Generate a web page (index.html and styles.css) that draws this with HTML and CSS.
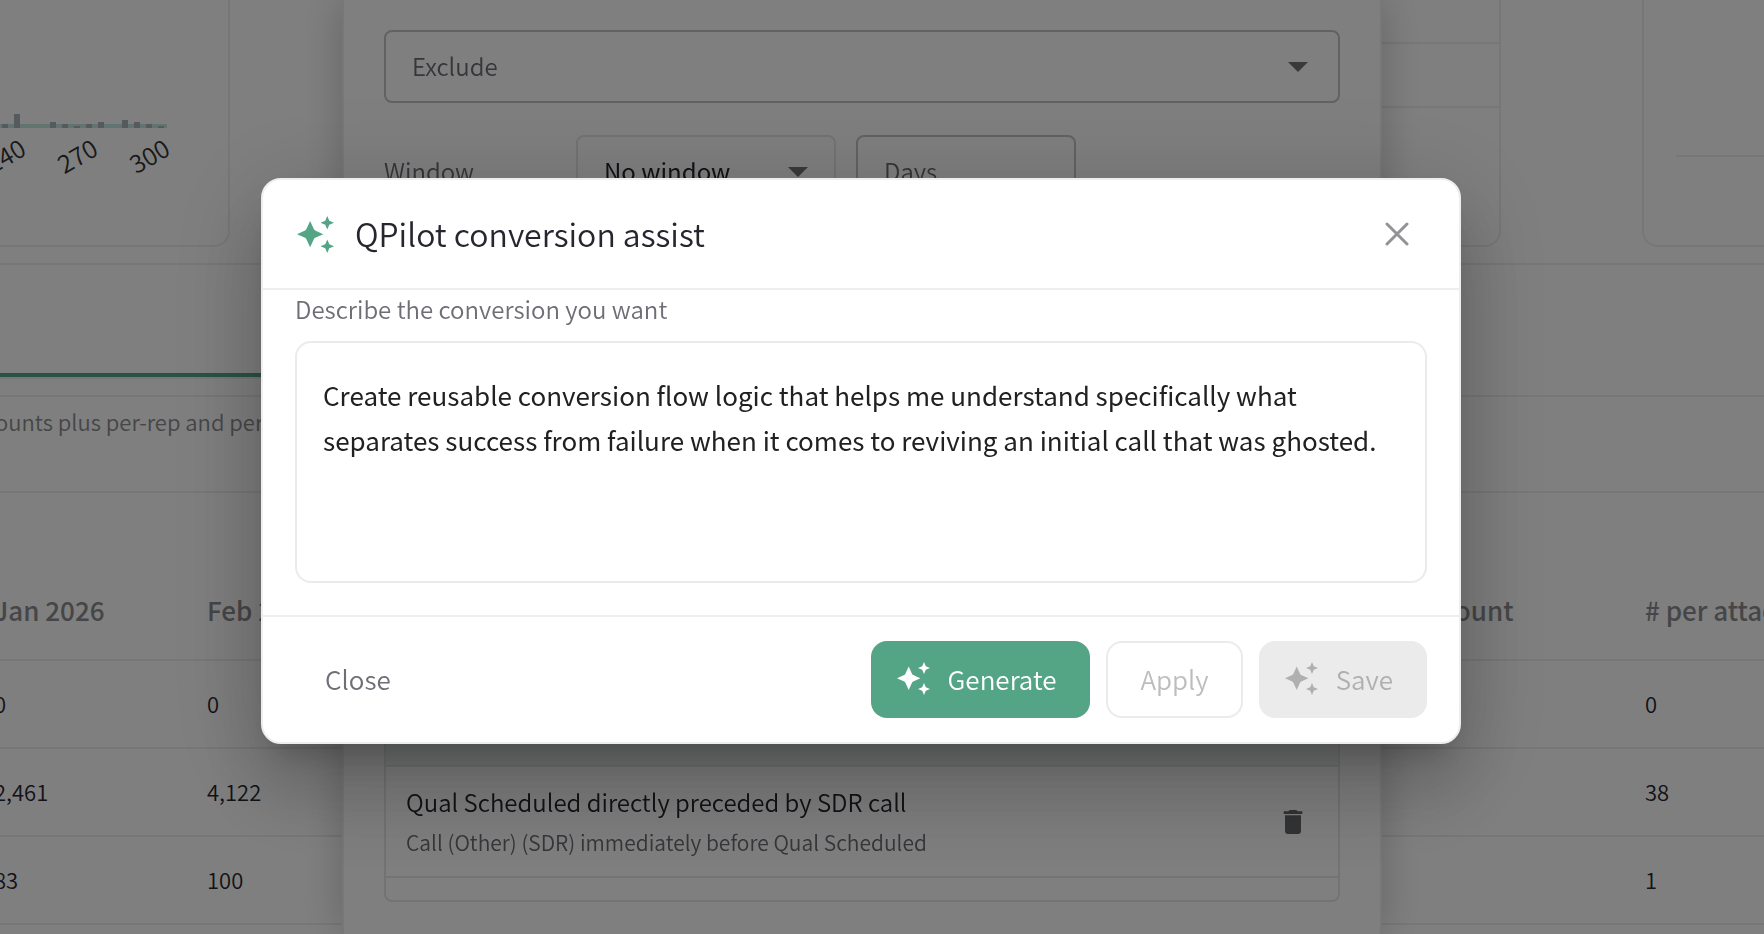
FILE: index.html
```html
<!DOCTYPE html>
<html lang="en">
<head>
<meta charset="utf-8">
<meta name="viewport" content="width=device-width, initial-scale=1">
<title>QPilot conversion assist</title>
<link rel="stylesheet" href="styles.css">
</head>
<body>
<svg class="sprite" aria-hidden="true">
  <symbol id="sparkle" viewBox="0 0 110 110">
    <path d="M39 15L50 39Q51 42 54 43L78 54L54 65Q51 66 50 69L39 93L28 69Q27 66 24 65L0 54L24 43Q27 42 28 39Z"/>
    <path d="M90 0L96 14L110 20L96 26L90 40L84 26L70 20L84 14Z"/>
    <path d="M90 70L96 84L110 90L96 96L90 110L84 96L70 90L84 84Z"/>
  </symbol>
</svg>

<main class="page">
  <section class="cards">
    <div class="card card-chart">
      <svg class="chart" viewBox="0 0 228 245" width="228" height="245" role="img" aria-label="Distribution">
        <rect class="chart-band" x="0" y="124" width="167" height="4"/>
        <g class="chart-bars">
          <rect x="2" y="124" width="6" height="4"/>
          <rect x="14" y="114" width="6" height="14"/>
          <rect x="50" y="122" width="6" height="6"/>
          <rect x="62" y="124" width="6" height="4"/>
          <rect x="74" y="126" width="6" height="2"/>
          <rect x="86" y="124" width="6" height="4"/>
          <rect x="98" y="122" width="6" height="6"/>
          <rect x="122" y="120" width="6" height="8"/>
          <rect x="134" y="122" width="6" height="6"/>
          <rect x="146" y="124" width="6" height="4"/>
          <rect x="158" y="126" width="6" height="2"/>
        </g>
        <g class="chart-labels">
          <text transform="translate(28 154) rotate(-30)">240</text>
          <text transform="translate(100 154) rotate(-30)">270</text>
          <text transform="translate(172 154) rotate(-30)">300</text>
        </g>
      </svg>
    </div>
    <div class="card card-list">
      <div class="list-line"></div>
      <div class="list-line"></div>
    </div>
    <div class="card card-last"><div class="axis-line"></div></div>
  </section>
  <div class="tabs"><div class="tab-active"></div></div>
  <p class="summary">ounts plus per-rep and per-account rates</p>
  <table class="data">
    <colgroup><col class="col-month"><col class="col-month"><col><col class="col-month"><col class="col-wide"></colgroup>
    <thead>
      <tr><th scope="col">Jan 2026</th><th scope="col">Feb 2026</th><td></td><th scope="col">Count</th><th scope="col"># per attached</th></tr>
    </thead>
    <tbody>
      <tr><td>0</td><td>0</td><td></td><td></td><td>0</td></tr>
      <tr><td>2,461</td><td>4,122</td><td></td><td></td><td>38</td></tr>
      <tr><td>83</td><td>100</td><td></td><td></td><td>1</td></tr>
      <tr><td></td><td></td><td></td><td></td><td></td></tr>
    </tbody>
  </table>
</main>

<div class="drawer-layer">
  <aside class="drawer">
    <div class="field">
      <select class="control muted strong-border" aria-label="Exclude"><option>Exclude</option></select>
      <svg class="caret" viewBox="0 0 20 10" aria-hidden="true"><path d="M0 0h20L10 10z"/></svg>
    </div>
    <div class="window-row">
      <label class="window-label" for="window">Window</label>
      <div class="field field-window">
        <select class="control" id="window"><option>No window</option></select>
        <svg class="caret" viewBox="0 0 20 10" aria-hidden="true"><path d="M0 0h20L10 10z"/></svg>
      </div>
      <input class="control days strong-border" type="text" placeholder="Days" aria-label="Days">
    </div>
    <div class="saved">
      <div class="saved-selected"></div>
      <div class="saved-row">
        <div class="saved-text">
          <div class="saved-title">Qual Scheduled directly preceded by SDR call</div>
          <div class="saved-sub">Call (Other) (SDR) immediately before Qual Scheduled</div>
        </div>
        <button class="icon-button" type="button" aria-label="Delete">
          <svg class="trash" viewBox="0 0 24 24"><path d="M6 19c0 1.100.9 2 2 2h8c1.100 0 2-.9 2-2V7H6v12zM19 4h-3.500l-1-1h-5l-1 1H5v2h14V4z"/></svg>
        </button>
      </div>
    </div>
  </aside>
</div>

<div class="overlay">
  <section class="dialog" role="dialog" aria-modal="true" aria-labelledby="dialog-title">
    <header class="dialog-header">
      <svg class="title-icon" aria-hidden="true"><use href="#sparkle"/></svg>
      <h1 class="dialog-title" id="dialog-title">QPilot conversion assist</h1>
      <button class="icon-button" type="button" aria-label="Close dialog">
        <svg class="cross" viewBox="0 0 24 24"><path d="M2 2L22 22M22 2L2 22"/></svg>
      </button>
    </header>
    <div class="dialog-body">
      <label class="prompt-label" for="prompt">Describe the conversion you want</label>
      <textarea class="prompt" id="prompt">Create reusable conversion flow logic that helps me understand specifically what separates success from failure when it comes to reviving an initial call that was ghosted.</textarea>
    </div>
    <footer class="dialog-footer">
      <button class="button button-text" type="button">Close</button>
      <button class="button button-primary" type="button"><svg class="button-icon" aria-hidden="true"><use href="#sparkle"/></svg>Generate</button>
      <button class="button button-outline" type="button" disabled>Apply</button>
      <button class="button button-disabled" type="button" disabled><svg class="button-icon" aria-hidden="true"><use href="#sparkle"/></svg>Save</button>
    </footer>
  </section>
</div>
</body>
</html>
```
FILE: styles.css
```css
:root {
  --line: #eeeeee;
  --green: #54a586;
  --ink: #26262f;
  --muted: #6e6e76;
}

* { box-sizing: border-box; }

body {
  margin: 0;
  height: 100vh;
  overflow: hidden;
  background: #fff;
  color: var(--ink);
  font-family: "Noto Sans CJK SC", "Noto Sans", sans-serif;
  font-size: 24px;
  font-weight: 350;
  line-height: 32px;
}

button, input, select, textarea {
  font: inherit;
  color: inherit;
}

.sprite { display: none; }

/* Report page */
.page {
  height: 100vh;
  overflow: hidden;
}

.cards {
  display: grid;
  grid-template-columns: 230px 1fr 122px;
  gap: 141px;
  height: 265px;
  padding-bottom: 18px;
  border-bottom: 2px solid var(--line);
}

.card {
  border: 2px solid var(--line);
  border-top: 0;
  border-radius: 0 0 16px 16px;
}

.card-chart {
  border-left: 0;
  border-bottom-left-radius: 0;
}

.card-last {
  border-right: 0;
  border-bottom-right-radius: 0;
  padding: 155px 0 0 32px;
}

.card-list { padding-top: 42px; }
.list-line { height: 64px; border-top: 2px solid var(--line); }
.axis-line { border-top: 2px solid var(--line); }

.chart { display: block; }
.chart-band { fill: #c2eae0; }
.chart-bars { fill: #acb4b8; }
.chart-labels { font-size: 25px; fill: #333; text-anchor: end; }

.tabs {
  height: 132px;
  padding-top: 108px;
  border-bottom: 2px solid var(--line);
}

.tab-active {
  width: 50%;
  height: 6px;
  border-top: 4px solid var(--green);
  border-bottom: 2px solid var(--line);
}

.summary {
  height: 96px;
  margin: 0;
  padding-top: 8px;
  border-bottom: 2px solid var(--line);
  color: #8c8c90;
  font-size: 22px;
  text-indent: -5px;
  white-space: nowrap;
}

.data {
  width: 100%;
  table-layout: fixed;
  border-collapse: collapse;
}

.col-month { width: 207px; }
.col-wide { width: 119px; }

.data th, .data td {
  height: 88px;
  padding: 0 0 2px;
  border-bottom: 2px solid var(--line);
  text-align: left;
  white-space: nowrap;
  font-size: 22px;
}

.data tr > :first-child { text-indent: -6px; }

.data th {
  height: 167px;
  padding-top: 101px;
  vertical-align: top;
  color: #8c8c90;
  font-size: 26px;
  font-weight: 500;
}

/* Conversion drawer */
.drawer-layer {
  position: fixed;
  inset: 0;
  display: flex;
  justify-content: center;
  padding-right: 40px;
}

.drawer {
  display: flex;
  flex-direction: column;
  width: 1040px;
  padding: 30px 40px 32px;
  border: solid var(--line);
  border-width: 0 2px;
  background: #fff;
  box-shadow: 0 0 40px rgba(0, 0, 0, .22);
}

.field {
  display: grid;
  align-items: center;
}

.field > * { grid-area: 1 / 1; }

.caret {
  width: 20px;
  height: 10px;
  margin-right: 32px;
  justify-self: end;
  fill: #757575;
  pointer-events: none;
}

.control {
  appearance: none;
  width: 100%;
  height: 73px;
  padding: 0 26px 2px;
  border: 2px solid #e6e6e6;
  border-radius: 8px;
  background: none;
}

.strong-border { border-color: #c4c4c4; }
.muted { color: var(--muted); }
.control::placeholder { color: var(--muted); opacity: 1; }

.window-row {
  display: flex;
  align-items: center;
  margin-top: 32px;
}

.window-label { width: 192px; padding-bottom: 2px; color: var(--muted); }
.field-window { width: 260px; margin-right: 20px; }
.field-window .control { font-weight: 400; }
.field-window .caret { margin-right: 28px; }
.days { width: 220px; }

.saved {
  margin-top: auto;
  padding-bottom: 22px;
  border: 2px solid #e6e6e6;
  border-radius: 8px;
}

.saved-selected {
  height: 120px;
  background: #eef5f2;
}

.saved-row {
  display: flex;
  align-items: center;
  justify-content: space-between;
  padding: 15px 29px 14px 20px;
  border: solid #e6e6e6;
  border-width: 2px 0;
}

.saved-title { line-height: 40px; }
.saved-sub { line-height: 40px; font-size: 21px; color: var(--muted); }

.icon-button {
  display: flex;
  padding: 0;
  border: 0;
  background: none;
}

.trash { width: 32px; height: 32px; fill: #66686c; }

/* Dialog */
.overlay {
  position: fixed;
  inset: 0;
  display: flex;
  align-items: center;
  justify-content: center;
  padding: 0 42px 12px 0;
  background: rgba(0, 0, 0, .5);
}

.dialog {
  width: 1200px;
  border: 2px solid var(--line);
  border-radius: 20px;
  background: #fff;
  box-shadow:
    0 22px 30px -14px rgba(0, 0, 0, .2),
    0 48px 76px 6px rgba(0, 0, 0, .14),
    0 18px 92px 16px rgba(0, 0, 0, .12);
}

.dialog-header {
  display: flex;
  align-items: center;
  height: 110px;
  padding: 0 50px 0 34px;
  border-bottom: 2px solid var(--line);
}

.title-icon { width: 37px; height: 37px; fill: var(--green); }

.dialog-title {
  flex: 1;
  margin: 0 0 0 21px;
  padding-bottom: 2px;
  font-size: 32px;
  font-weight: 350;
  line-height: 48px;
}

.cross {
  width: 24px;
  height: 24px;
  fill: none;
  stroke: #939396;
  stroke-width: 3;
  stroke-linecap: round;
}

.dialog-body {
  display: flex;
  flex-direction: column;
  gap: 16px;
  padding: 3px 32px 32px;
}

.prompt-label { color: var(--muted); }

.prompt {
  width: 100%;
  height: 242px;
  padding: 29px 24px 29px 26px;
  border: 2px solid #ebebeb;
  border-radius: 16px;
  background: #fff;
  color: #212121;
  font-size: 26px;
  font-weight: 400;
  line-height: 45px;
  resize: none;
}

.dialog-footer {
  display: flex;
  gap: 16px;
  padding: 24px 32px;
  border-top: 2px solid var(--line);
}

.button {
  display: flex;
  align-items: center;
  gap: 18px;
  height: 77px;
  padding: 0 32px 2px;
  border: 2px solid transparent;
  border-radius: 16px;
  background: none;
  font-size: 26px;
  font-weight: 350;
}

.button-icon { width: 33px; height: 33px; fill: currentColor; }
.button-text { margin-right: auto; padding-left: 28px; color: var(--muted); }
.button-primary { padding-left: 24px; background: var(--green); color: #fff; }
.button-outline { border-color: #ebebeb; color: #bdbdbd; }
.button-disabled { padding-left: 24px; background: #ebebeb; color: #b0b0b2; }
```
